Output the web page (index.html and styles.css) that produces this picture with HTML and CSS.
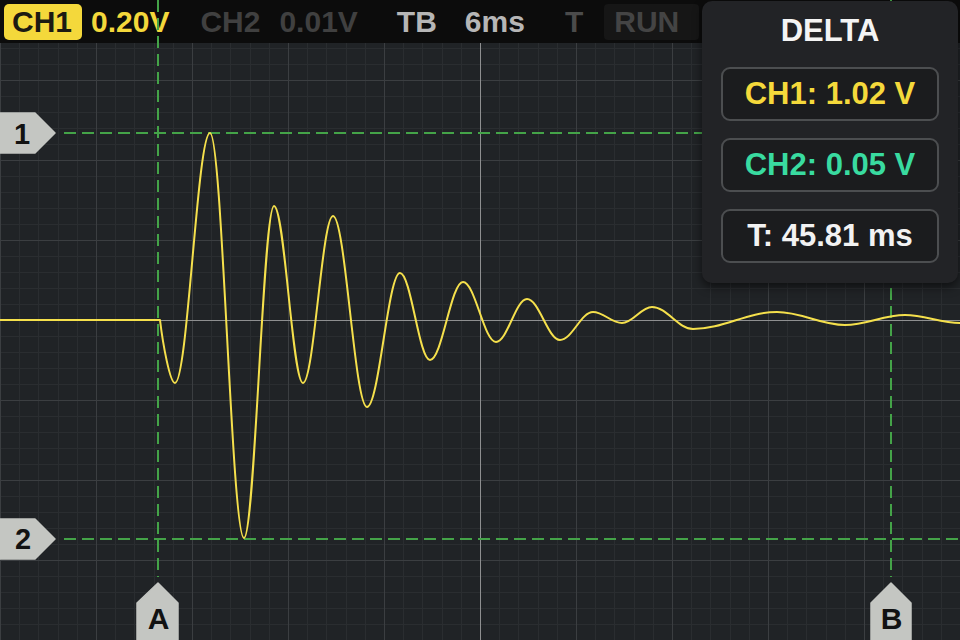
FILE: index.html
```html
<!DOCTYPE html>
<html lang="en">
<head>
<meta charset="utf-8">
<title>Scope</title>
<link rel="stylesheet" href="styles.css">
</head>
<body>
<div class="scope">
  <header class="topbar">
    <span class="badge">CH1</span>
    <span class="val ch1">0.20V</span>
    <span class="val dim ch2-label">CH2</span>
    <span class="val dim ch2-val">0.01V</span>
    <span class="val light tb-label">TB</span>
    <span class="val light tb-val">6ms</span>
    <span class="val dim2 trig">T</span>
    <span class="run">RUN</span>
  </header>

  <svg class="trace" width="960" height="640" viewBox="0 0 960 640" xmlns="http://www.w3.org/2000/svg">
    <g class="cursor-lines">
      <line x1="158" y1="0" x2="158" y2="577"/>
      <line x1="891" y1="0" x2="891" y2="577"/>
      <line x1="64" y1="133" x2="960" y2="133"/>
      <line x1="64" y1="539" x2="960" y2="539"/>
    </g>
    <path class="wave" d="M0,320 L160,320 C163,345 170,383 175,383 C187.7,383 197.3,133 210,133 C222.4,133 231.6,538 244,538 C254.9,538 263.1,206 274,206 C284.6,206 292.4,383 303,383 C313.9,383 322.1,216 333,216 C345.4,216 354.6,407 367,407 C379,407 388,273 400,273 C410.9,273 419.1,360 430,360 C442,360 451,282 463,282 C475,282 484,342 496,342 C507.3,342 515.7,299 527,299 C539,299 548,340 560,340 C572,340 581,312 593,312 C603.6,312 611.4,323 622,323 C632.9,323 641.1,307 652,307 C666.9,307 678.1,329 693,329 C723.6,329 746.4,312 777,312 C801.8,312 820.2,325 845,325 C866.9,325 883.1,315 905,315 C925,315 940,323 960,323"/>
    <g class="marker">
      <polygon points="0,113 35,113 55,133 35,153 0,153"/>
      <text x="22" y="144">1</text>
    </g>
    <g class="marker">
      <polygon points="0,519 35,519 55,539 35,559 0,559"/>
      <text x="23" y="549">2</text>
    </g>
    <g class="marker">
      <polygon points="137,642 137,603 158,583 178,603 178,642"/>
      <text class="big" x="158.5" y="629">A</text>
    </g>
    <g class="marker">
      <polygon points="871,642 871,603 891,583 911,603 911,642"/>
      <text class="big" x="891.5" y="629">B</text>
    </g>
  </svg>

  <aside class="delta">
    <div class="delta-title">DELTA</div>
    <div class="delta-box yellow">CH1: 1.02 V</div>
    <div class="delta-box teal">CH2: 0.05 V</div>
    <div class="delta-box white">T: 45.81 ms</div>
  </aside>
</div>
</body>
</html>
```

FILE: styles.css
```css
html, body {
  margin: 0;
  padding: 0;
  background: #202326;
}

.scope {
  position: relative;
  width: 960px;
  height: 640px;
  overflow: hidden;
  font-family: "Liberation Sans", Arial, sans-serif;
  font-weight: bold;
  background:
    linear-gradient(#8e8f90, #8e8f90) 480px 0 / 1px 100% no-repeat,
    linear-gradient(#8e8f90, #8e8f90) 0 320px / 100% 1px no-repeat,
    repeating-linear-gradient(to right, #3b3e41 0 1px, transparent 1px 96px),
    repeating-linear-gradient(to bottom, #3b3e41 0 1px, transparent 1px 80px),
    repeating-linear-gradient(to right, #2a2d30 0 1px, transparent 1px 19.2px),
    repeating-linear-gradient(to bottom, #2a2d30 0 1px, transparent 1px 16px),
    #202326;
}

/* ---------- top bar ---------- */
.topbar {
  height: 43px;
  background: #0c0c0c;
  display: flex;
  align-items: center;
  font-size: 30px;
  line-height: 36px;
  white-space: nowrap;
}

.badge {
  margin-left: 4px;
  padding: 0 10px 0 8px;
  height: 36px;
  background: #f4d83b;
  color: #1c1a12;
  border-radius: 5px;
}

.val.ch1 {
  margin-left: 9px;
  color: #f4d83b;
}

.dim { color: #404040; }
.dim2 { color: #4b4b4b; }
.light { color: #b6b6b6; }

.ch2-label { margin-left: 31px; }
.ch2-val { margin-left: 19px; }
.tb-label { margin-left: 39px; }
.tb-val { margin-left: 28px; }
.trig { margin-left: 40px; }

.run {
  margin-left: 21px;
  height: 36px;
  padding: 0 20px 0 10px;
  background: #161616;
  color: #444444;
  border-radius: 4px;
}

/* ---------- canvas overlay ---------- */
.trace {
  position: absolute;
  left: 0;
  top: 0;
}

.cursor-lines line {
  stroke: #44a348;
  stroke-width: 2;
  stroke-dasharray: 12 6;
}

.wave {
  fill: none;
  stroke: #f5e04c;
  stroke-width: 2;
  stroke-linejoin: round;
}

.marker polygon {
  fill: #c4c6c2;
  stroke: #c4c6c2;
  stroke-width: 1.5;
  stroke-linejoin: round;
}

.marker text {
  font-family: "Liberation Sans", Arial, sans-serif;
  font-weight: bold;
  font-size: 29px;
  fill: #121212;
  text-anchor: middle;
}

.marker text.big {
  font-size: 30px;
}

/* ---------- delta panel ---------- */
.delta {
  position: absolute;
  left: 702px;
  top: 1px;
  width: 256px;
  height: 282px;
  box-sizing: border-box;
  padding: 12px 19px 18px;
  background: #222326;
  border-radius: 10px;
  box-shadow: 0 4px 10px rgba(0, 0, 0, 0.55);
  display: flex;
  flex-direction: column;
  gap: 17px;
}

.delta-title {
  color: #f4f4f4;
  font-size: 31px;
  line-height: 36px;
  text-align: center;
  margin-bottom: 1px;
}

.delta-box {
  height: 54px;
  box-sizing: border-box;
  border: 2px solid #4c4e50;
  border-radius: 9px;
  background: #1b1c1e;
  display: flex;
  align-items: center;
  justify-content: center;
  font-size: 31px;
  line-height: 36px;
}

.yellow { color: #f5d93b; }
.teal { color: #39dba0; }
.white { color: #f2f2f2; }
```
